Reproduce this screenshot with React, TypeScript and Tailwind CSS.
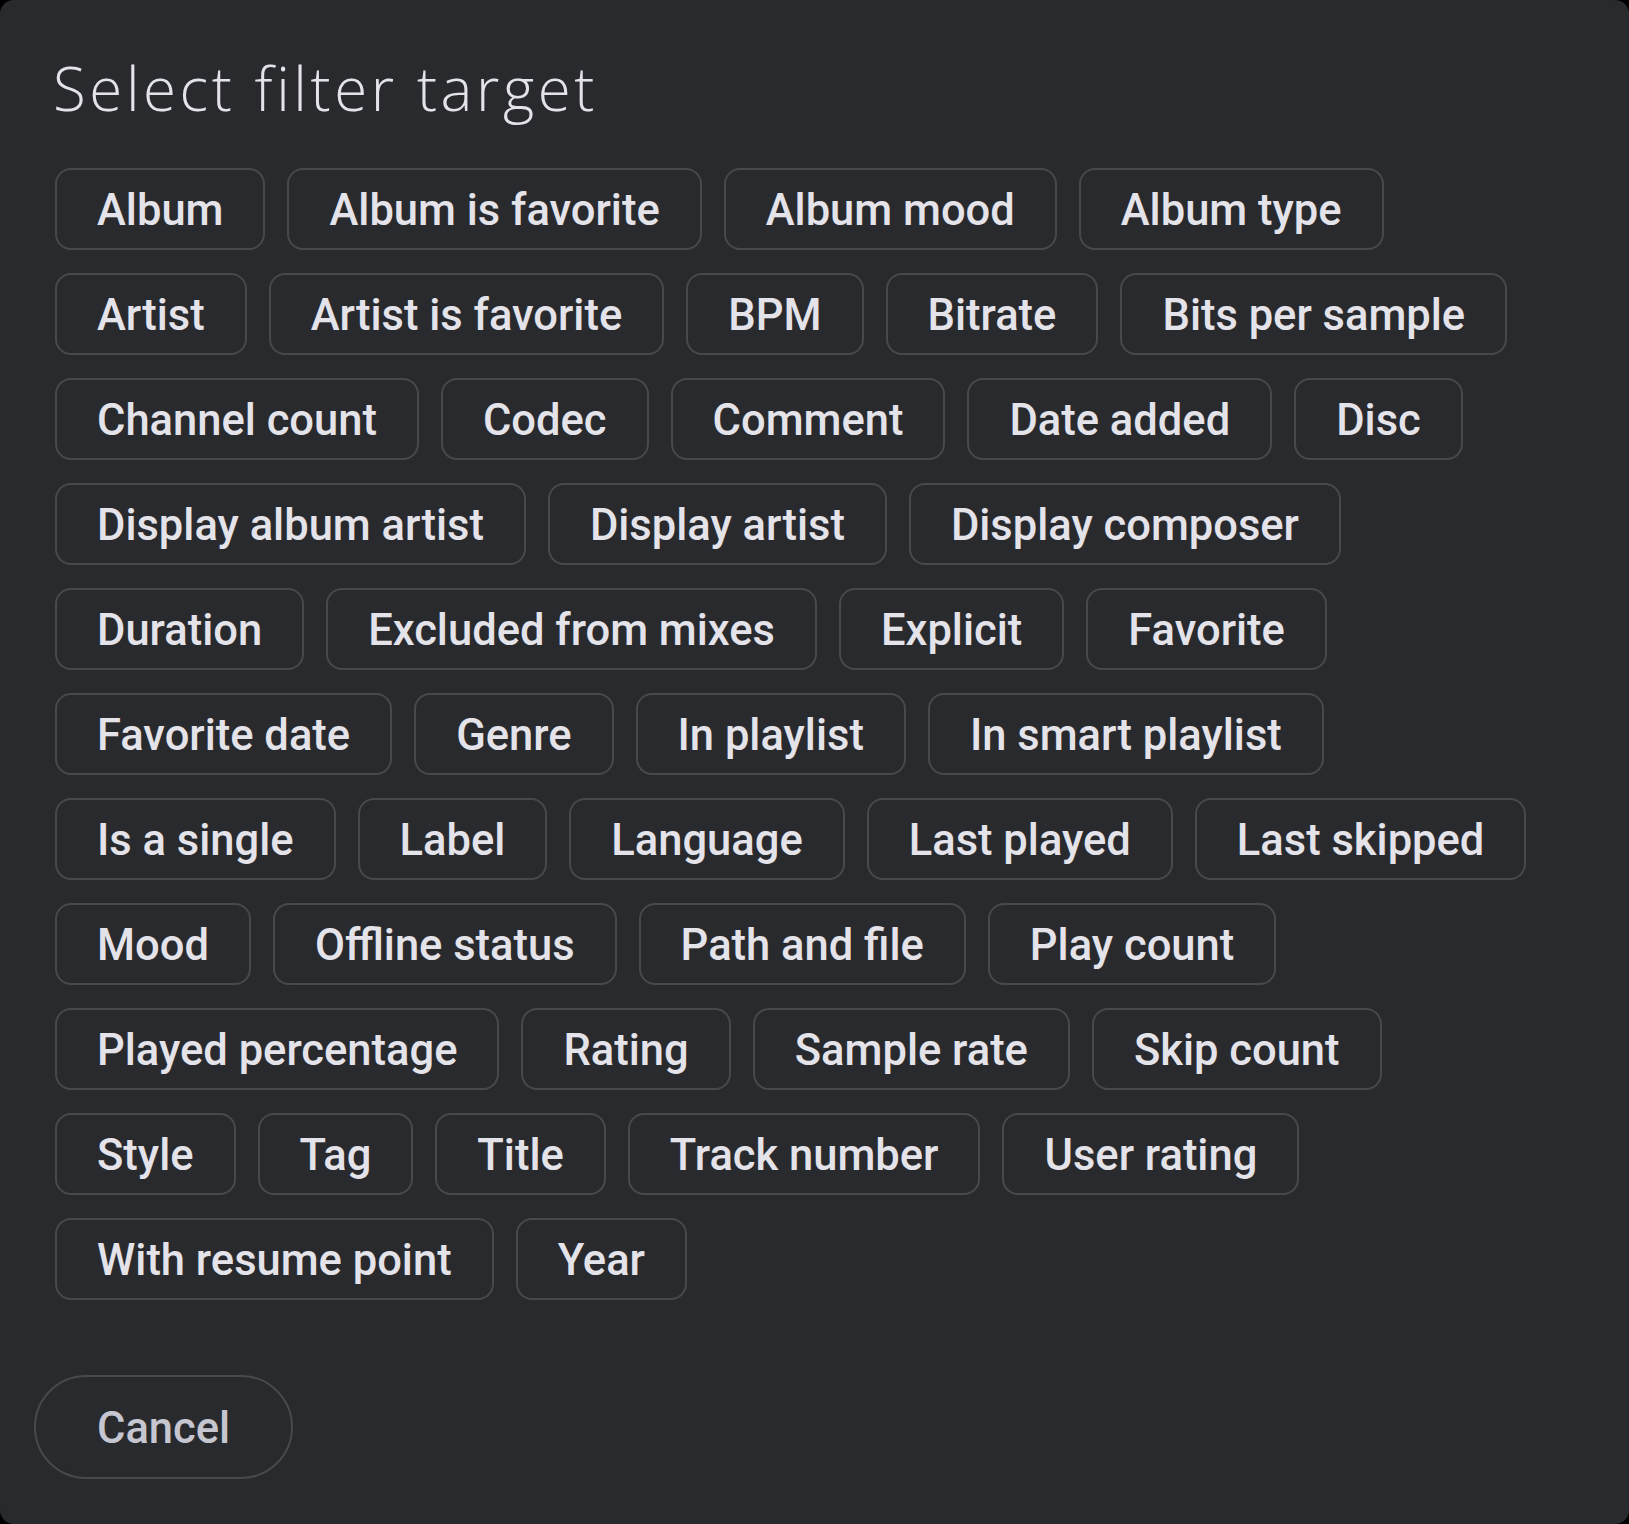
import React from "react";

const targets: string[][] = [
  ["Album", "Album is favorite", "Album mood", "Album type"],
  ["Artist", "Artist is favorite", "BPM", "Bitrate", "Bits per sample"],
  ["Channel count", "Codec", "Comment", "Date added", "Disc"],
  ["Display album artist", "Display artist", "Display composer"],
  ["Duration", "Excluded from mixes", "Explicit", "Favorite"],
  ["Favorite date", "Genre", "In playlist", "In smart playlist"],
  ["Is a single", "Label", "Language", "Last played", "Last skipped"],
  ["Mood", "Offline status", "Path and file", "Play count"],
  ["Played percentage", "Rating", "Sample rate", "Skip count"],
  ["Style", "Tag", "Title", "Track number", "User rating"],
  ["With resume point", "Year"],
];

function Chip({ label }: { label: string }) {
  return (
    <button className="h-[82px] px-[40px] pt-[4px] rounded-[16px] border-2 border-[#48494c] bg-transparent text-[43.5px] font-medium leading-none text-[#e4e3e9] whitespace-nowrap">
      {label}
    </button>
  );
}

export default function App() {
  return (
    <div className="min-h-screen bg-black" style={{ fontFamily: "Roboto, 'Liberation Sans', sans-serif" }}>
      <div className="h-[1524px] w-[1629px] bg-[#292a2e] rounded-[14px] flex flex-col">
        {/* Header */}
        <h1
          className="px-[53px] pt-[52px] text-[60px] font-light leading-[72px] text-[#e4e3e9] tracking-[3.6px]"
          style={{ fontFamily: "'Open Sans', 'Noto Sans', sans-serif" }}
        >
          Select filter target
        </h1>

        {/* Filter targets */}
        <div className="px-[55px] mt-[44px] flex flex-col gap-y-[23px]">
          {targets.map((row, i) => (
            <div key={i} className="flex flex-nowrap gap-x-[22px]">
              {row.map((t) => (
                <Chip key={t} label={t} />
              ))}
            </div>
          ))}
        </div>

        {/* Footer */}
        <div className="px-[34px] mt-[75px]">
          <button className="h-[104px] px-[61px] pt-[4px] rounded-full border-2 border-[#48494c] text-[43.5px] font-medium leading-none text-[#c5c6d0]">
            Cancel
          </button>
        </div>
      </div>
    </div>
  );
}
